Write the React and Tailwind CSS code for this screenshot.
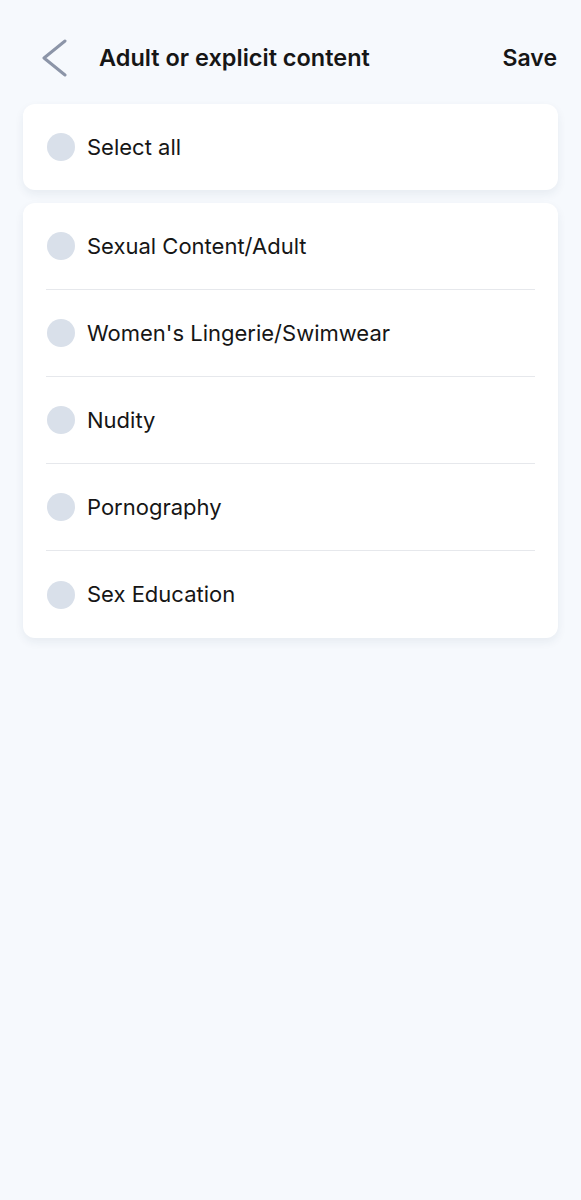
import React from 'react';

const items = [
    'Sexual Content/Adult',
    "Women's Lingerie/Swimwear",
    'Nudity',
    'Pornography',
    'Sex Education',
];

function Dot() {
    return <span className="w-[28px] h-[28px] rounded-full bg-[#d9e0ea] shrink-0" />;
}

export default function App() {
    return (
        <div className="min-h-[1200px] bg-[#f6f9fd] font-['Inter',sans-serif] text-[#161616]">

            {/* Cabecera */}
            <div className="h-[104px] flex items-center pl-[40px] pr-[24px] pt-[12px]">
                <svg width="28" height="38" viewBox="0 0 28 38" fill="none" stroke="#8c95a8" strokeWidth="3" strokeLinecap="round" strokeLinejoin="round">
                    <path d="M25 2 4 19l21 17" />
                </svg>
                <h1 className="ml-[31px] text-[23.5px] font-semibold">Adult or explicit content</h1>
                <button className="ml-auto text-[23px] font-semibold">Save</button>
            </div>

            {/* Seleccionar todo */}
            <div className="mx-[23px] bg-white rounded-[12px] shadow-[0_4px_10px_rgba(30,50,90,0.07)] h-[86px] flex items-center px-[24px] gap-[12px]">
                <Dot />
                <span className="text-[22px]">Select all</span>
            </div>

            {/* Lista */}
            <div className="mx-[23px] mt-[13px] bg-white rounded-[12px] shadow-[0_4px_10px_rgba(30,50,90,0.07)] px-[23px]">
                {items.map((label, i) => (
                    <div key={label} className={`h-[87px] flex items-center gap-[12px] pl-[1px] ${i < items.length - 1 ? 'border-b border-[#e6e8ec]' : ''}`}>
                        <Dot />
                        <span className="text-[22px]">{label}</span>
                    </div>
                ))}
            </div>
        </div>
    );
}
